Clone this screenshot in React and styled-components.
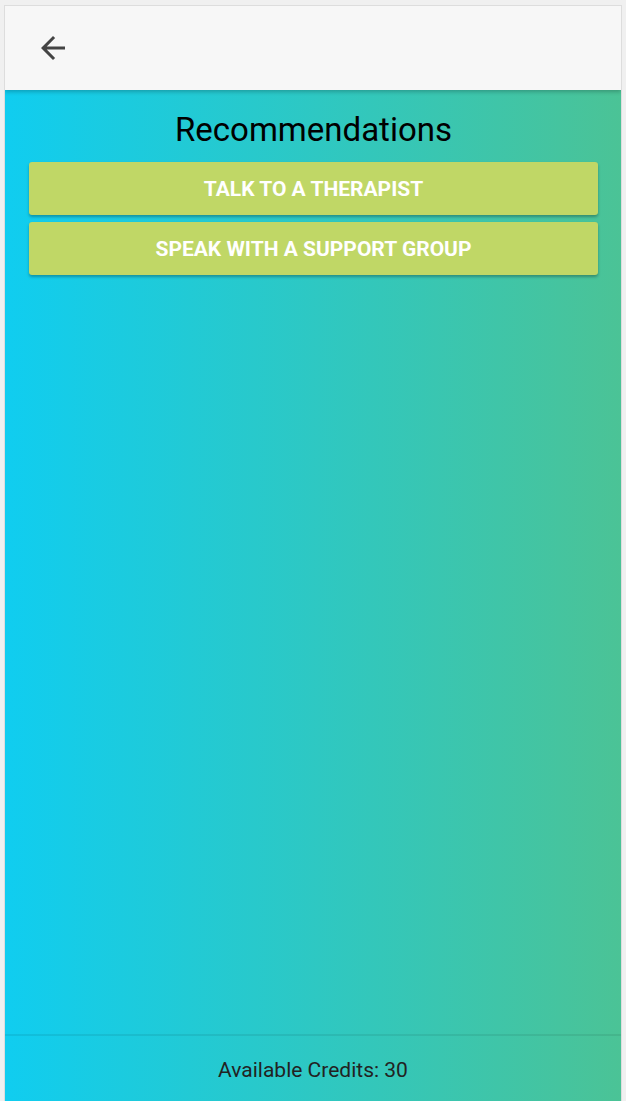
import React from 'react'
import styled, { createGlobalStyle } from 'styled-components'

const GlobalStyle = createGlobalStyle`
    html, body {
        margin: 0;
        padding: 0;
        background: #f0f0f0;
        font-family: Roboto, "Liberation Sans", sans-serif;
    }
`

const Frame = styled.div`
    display: flex;
    flex-direction: column;
    margin: 5px 4px 0 4px;
    height: calc(100vh - 5px);
    border: 1px solid #dddddd;
    border-bottom: none;
    box-sizing: border-box;
    overflow: hidden;
`

const Header = styled.header`
    position: relative;
    z-index: 1;
    display: flex;
    align-items: center;
    height: 84px;
    padding-left: 30px;
    background: #f7f7f7;
    box-shadow: 0 2px 4px rgba(0, 0, 0, 0.22);
    flex-shrink: 0;
`

const BackButton = styled.button`
    display: flex;
    width: 36px;
    height: 36px;
    padding: 0;
    border: none;
    background: transparent;
    color: #444444;
    cursor: pointer;
`

const Body = styled.div`
    flex: 1;
    display: flex;
    flex-direction: column;
    background: linear-gradient(to right, #10cdf0, #4bc396);
`

const Content = styled.main`
    flex: 1;
    display: flex;
    flex-direction: column;
    gap: 7px;
    padding: 0 23px 0 24px;
`

const Title = styled.h1`
    margin: 21px 0 6px;
    font-size: 33px;
    font-weight: 400;
    line-height: 38px;
    text-align: center;
    color: #000000;
`

const Action = styled.button`
    height: 53px;
    border: none;
    border-radius: 3px;
    background: #c0d766;
    color: #ffffff;
    font-family: Roboto, "Liberation Sans", sans-serif;
    font-size: 21px;
    font-weight: 700;
    text-transform: uppercase;
    box-shadow: 0 2px 3px rgba(0, 0, 0, 0.28);
    cursor: pointer;
`

const Footer = styled.footer`
    display: flex;
    align-items: center;
    justify-content: center;
    height: 67px;
    padding-top: 3px;
    box-sizing: border-box;
    border-top: 2px solid rgba(0, 0, 0, 0.07);
    font-size: 21px;
    color: #222222;
    flex-shrink: 0;
`

const ArrowBack = () => (
    <svg width="36" height="36" viewBox="0 0 24 24" fill="currentColor">
        <path d="M20 11H7.83l5.59-5.59L12 4l-8 8 8 8 1.41-1.41L7.83 13H20v-2z" />
    </svg>
)

export default function App() {
    return (
        <>
            <GlobalStyle />
            <Frame>
                <Header>
                    <BackButton aria-label="Back">
                        <ArrowBack />
                    </BackButton>
                </Header>
                <Body>
                    <Content>
                        <Title>Recommendations</Title>
                        <Action>Talk to a therapist</Action>
                        <Action>Speak with a support group</Action>
                    </Content>
                    <Footer>Available Credits: 30</Footer>
                </Body>
            </Frame>
        </>
    )
}
